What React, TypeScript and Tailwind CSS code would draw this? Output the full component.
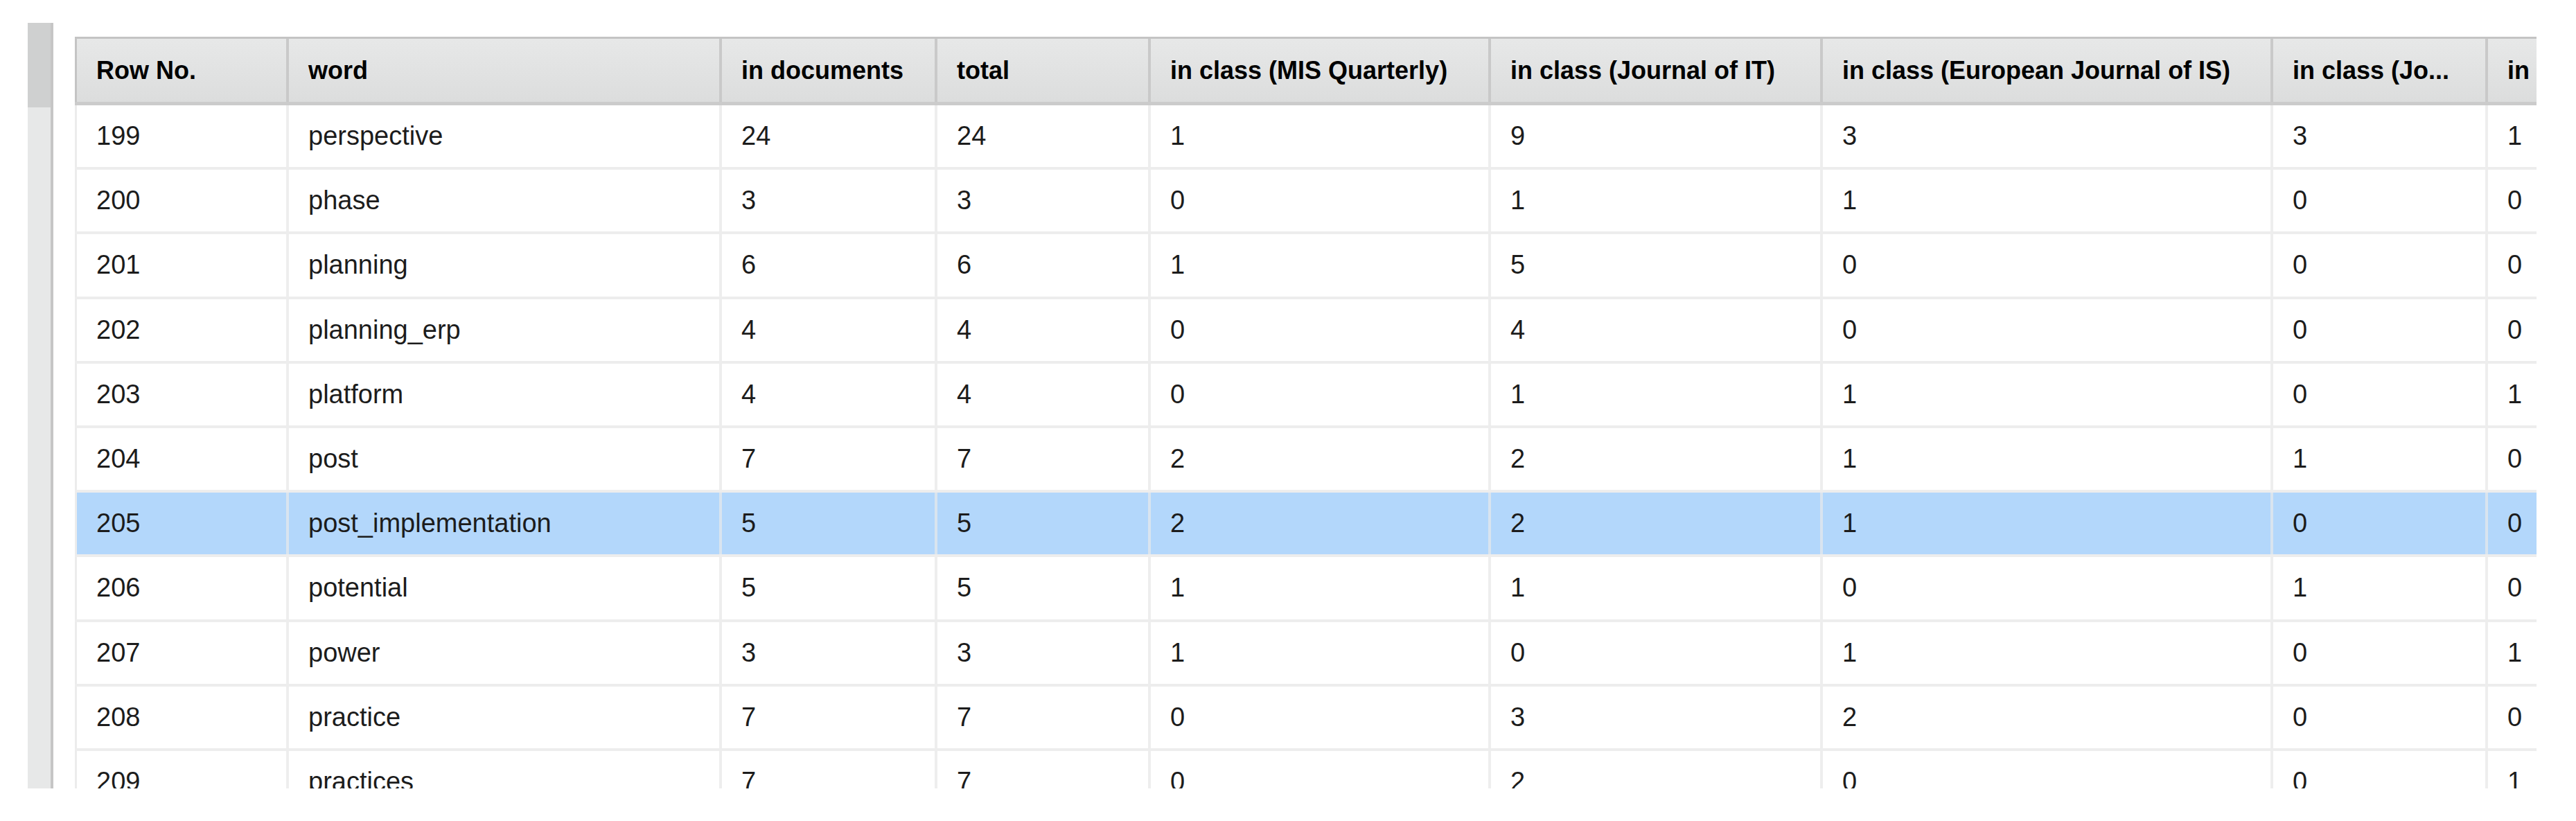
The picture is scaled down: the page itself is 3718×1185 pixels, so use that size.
import React from "react";

const widths = [
  "w-[305px]",
  "w-[625px]",
  "w-[311px]",
  "w-[308px]",
  "w-[491px]",
  "w-[479px]",
  "w-[650px]",
  "w-[310px]",
  "w-[300px]",
];

const headers = [
  "Row No.",
  "word",
  "in documents",
  "total",
  "in class (MIS Quarterly)",
  "in class (Journal of IT)",
  "in class (European Journal of IS)",
  "in class (Jo...",
  "in",
];

const rows: (string | number)[][] = [
  [199, "perspective", 24, 24, 1, 9, 3, 3, 1],
  [200, "phase", 3, 3, 0, 1, 1, 0, 0],
  [201, "planning", 6, 6, 1, 5, 0, 0, 0],
  [202, "planning_erp", 4, 4, 0, 4, 0, 0, 0],
  [203, "platform", 4, 4, 0, 1, 1, 0, 1],
  [204, "post", 7, 7, 2, 2, 1, 1, 0],
  [205, "post_implementation", 5, 5, 2, 2, 1, 0, 0],
  [206, "potential", 5, 5, 1, 1, 0, 1, 0],
  [207, "power", 3, 3, 1, 0, 1, 0, 1],
  [208, "practice", 7, 7, 0, 3, 2, 0, 0],
  [209, "practices", 7, 7, 0, 2, 0, 0, 1],
];

export default function App() {
  return (
    <div className="w-[3718px] h-[1185px] bg-white flex items-start pt-[33px] pl-[40px] gap-[31px] font-['Liberation_Sans',Arial,sans-serif] overflow-hidden">
      {/* vertical scrollbar */}
      <div className="w-[37px] h-[1105px] shrink-0 flex flex-col bg-[#e7e8e8] border-r-4 border-[#c6c6c6]">
        <div className="h-[122px] bg-[#cfd0d0]" />
      </div>

      {/* grid */}
      <div className="mt-[20px] w-[3553px] h-[1085px] overflow-hidden flex flex-col">
        <div className="h-[99px] shrink-0 flex border-t-[3px] border-b-[5px] border-t-[#c4c4c4] border-b-[#cbcbcb] bg-linear-to-b from-[#e7e8e8] to-[#dcdddd]">
          {headers.map((h, i) => (
            <div
              key={i}
              className={`${widths[i]} shrink-0 flex items-center pl-[28px] overflow-hidden whitespace-nowrap text-[36px] font-bold text-black ${
                i === 0 ? "border-l-[3px] border-[#c4c4c4]" : "border-l-4 border-[#c9c9c9]"
              }`}
            >
              {h}
            </div>
          ))}
        </div>

        {rows.map((r, ri) => {
          const selected = r[0] === 205;
          return (
            <div
              key={ri}
              className={`h-[93.2px] shrink-0 flex border-b-4 border-[#ededed] ${
                selected ? "bg-[#b3d7fb]" : "bg-white"
              }`}
            >
              {r.map((v, ci) => (
                <div
                  key={ci}
                  className={`${widths[ci]} shrink-0 flex items-center pl-[28px] overflow-hidden whitespace-nowrap text-[38px] text-[#1c1c1c] ${
                    ci === 0
                      ? "border-l-[3px] border-[#ececec]"
                      : selected
                      ? "border-l-4 border-[#d9e4ef]"
                      : "border-l-4 border-[#eeeeee]"
                  }`}
                >
                  {v}
                </div>
              ))}
            </div>
          );
        })}
      </div>
    </div>
  );
}
